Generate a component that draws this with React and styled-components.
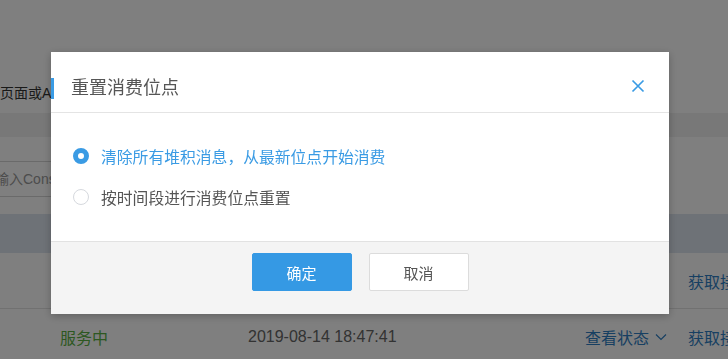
import React from "react";
import styled, { createGlobalStyle } from "styled-components";

const Global = createGlobalStyle`
  html, body { margin: 0; padding: 0; background: #fff; overflow: hidden; }
  body { font-family: "Liberation Sans", "Noto Sans CJK SC", sans-serif; }
  * { box-sizing: border-box; }
`;

const Page = styled.div`
  width: 728px;
  display: flex;
  flex-direction: column;
  color: #333;
`;

const Top = styled.div`
  height: 113px;
  flex-shrink: 0;
  padding-top: 83px;
  font-size: 14px;
  line-height: 20px;
  color: #333;
  white-space: nowrap;
`;

const Band = styled.div`
  height: ${(p) => p.$h}px;
  background: ${(p) => p.$bg || "#fff"};
  flex-shrink: 0;
`;

const SearchInput = styled.div`
  height: 36px;
  margin-left: -5px;
  width: 600px;
  border-top: 1px solid #d4d4d4;
  border-bottom: 1px solid #d4d4d4;
  font-size: 14px;
  line-height: 34px;
  color: #999;
  white-space: nowrap;
  flex-shrink: 0;
`;

const TableHead = styled.div`
  height: 39px;
  background: #dde5ef;
  flex-shrink: 0;
`;

const Row = styled.div`
  height: 56px;
  flex-shrink: 0;
  display: grid;
  grid-template-columns: 188px 337px 103px auto;
  align-items: center;
  padding-left: 60px;
  font-size: 16px;
  white-space: nowrap;
  border-bottom: ${(p) => (p.$line ? "1px solid #e3e3e3" : "none")};
`;

const Cell = styled.span`
  color: ${(p) => p.$color || "#666"};
  display: flex;
  align-items: center;
  gap: 6px;
`;

const Overlay = styled.div`
  position: fixed;
  inset: 0;
  background: rgba(0, 0, 0, 0.5);
  display: flex;
  align-items: flex-start;
  padding: 52px 0 0 51px;
`;

const Modal = styled.div`
  width: 618px;
  height: 262px;
  background: #fff;
  box-shadow: 0 2px 8px rgba(0, 0, 0, 0.25);
  display: flex;
  flex-direction: column;
  font-family: "Liberation Sans", "Noto Sans CJK SC", sans-serif;
`;

const Header = styled.div`
  height: 61px;
  flex-shrink: 0;
  display: flex;
  align-items: flex-start;
  justify-content: space-between;
  padding: 26px 24px 0 0;
  border-bottom: 1px solid #e4e4e4;
`;

const Title = styled.div`
  font-size: 18px;
  line-height: 21px;
  color: #555;
  border-left: 3px solid #3a9be4;
  padding-left: 17px;
`;

const Close = styled.button`
  border: none;
  background: none;
  padding: 0;
  margin-top: 1px;
  width: 14px;
  height: 14px;
  display: flex;
  cursor: pointer;
`;

const Body = styled.div`
  flex: 1;
  display: flex;
  flex-direction: column;
  gap: 17px;
  padding: 31px 0 0 22px;
`;

const Option = styled.label`
  display: flex;
  align-items: center;
  gap: 12px;
  height: 24px;
  font-size: 15.8px;
  color: ${(p) => (p.$active ? "#3a9be4" : "#555")};
  cursor: pointer;
`;

const Radio = styled.span`
  width: 16px;
  height: 16px;
  border-radius: 50%;
  flex-shrink: 0;
  background: #fff;
  border: ${(p) => (p.$active ? "5px solid #3a9be4" : "1px solid #d6d9de")};
`;

const Footer = styled.div`
  height: 73px;
  flex-shrink: 0;
  background: #f4f4f4;
  border-top: 1px solid #e2e2e2;
  display: flex;
  justify-content: center;
  gap: 17px;
  padding-top: 11px;
`;

const Button = styled.button`
  width: 100px;
  height: 38px;
  border-radius: 2px;
  font-family: inherit;
  font-size: 15px;
  cursor: pointer;
  background: ${(p) => (p.$primary ? "#3599e4" : "#fff")};
  color: ${(p) => (p.$primary ? "#fff" : "#555")};
  border: 1px solid ${(p) => (p.$primary ? "#3599e4" : "#dcdcdc")};
`;

export default function App() {
  return (
    <>
      <Global />
      <Page>
        <Top>页面或API</Top>
        <Band $h={24} $bg="#f0f0f0" />
        <Band $h={24} />
        <SearchInput>输入ConsumerGroup ID 进行搜索</SearchInput>
        <Band $h={17} />
        <TableHead />
        <Row $line>
          <Cell />
          <Cell />
          <Cell />
          <Cell $color="#2f7fc4">获取接入点</Cell>
        </Row>
        <Row>
          <Cell $color="#5ab043">服务中</Cell>
          <Cell $color="#666">2019-08-14 18:47:41</Cell>
          <Cell $color="#2f7fc4">
            查看状态
            <svg width="12" height="8" viewBox="0 0 12 8">
              <path d="M1 1.5 L6 6.5 L11 1.5" fill="none" stroke="#2f7fc4" strokeWidth="1.2" />
            </svg>
          </Cell>
          <Cell $color="#2f7fc4">获取接入点</Cell>
        </Row>
      </Page>
      <Overlay>
        <Modal>
          <Header>
            <Title>重置消费位点</Title>
            <Close aria-label="关闭">
              <svg width="14" height="14" viewBox="0 0 14 14">
                <path d="M1.5 1.5 L12.5 12.5 M12.5 1.5 L1.5 12.5" stroke="#3a9be4" strokeWidth="1.7" fill="none" />
              </svg>
            </Close>
          </Header>
          <Body>
            <Option $active>
              <Radio $active />
              清除所有堆积消息，从最新位点开始消费
            </Option>
            <Option>
              <Radio />
              按时间段进行消费位点重置
            </Option>
          </Body>
          <Footer>
            <Button $primary>确定</Button>
            <Button>取消</Button>
          </Footer>
        </Modal>
      </Overlay>
    </>
  );
}
